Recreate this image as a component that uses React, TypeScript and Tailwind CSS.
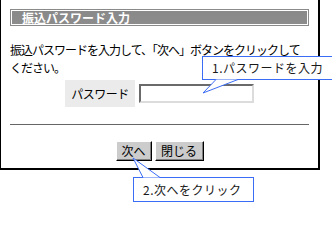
const jp = { fontFamily: '"Noto Sans CJK JP", "Noto Sans", sans-serif' };

function Callout({ className, text }: { className: string; text: string }) {
  return (
    <div
      className={`absolute bg-white border border-[#3b6cf5] text-[12px] text-[#1a1a1a] tracking-[0.5px] pl-[9px] flex items-center ${className}`}
      style={jp}
    >
      {text}
    </div>
  );
}

export default function App() {
  return (
    <div className="relative w-[332px] h-[202px] bg-white overflow-hidden" style={jp}>
      {/* dialog window */}
      <div className="w-[320px] h-[170px] border-l border-r-2 border-b-2 border-black flex flex-col px-[9px] pt-[9px]">
        <div className="h-[17px] border border-[#8a8a8a] p-px bg-white">
          <div className="h-full pl-[10px] flex items-center text-white font-bold text-[12px] leading-none [background:radial-gradient(circle,#8e8e8e_0.7px,transparent_0.8px)_0_0/2px_2px,linear-gradient(#505050,#747474)]">
            振込パスワード入力
          </div>
        </div>

        <p className="mt-[15px] text-[12px] leading-[18px] tracking-[-1px] text-black">
          振込パスワードを入力して、「次へ」ボタンをクリックしてください。
        </p>

        <div className="mt-[3px] flex justify-center items-center gap-[4px]">
          <div className="w-[70px] h-[27px] bg-[#ebebeb] flex items-center justify-center text-[12px] tracking-[-0.5px]">
            パスワード
          </div>
          <div className="w-[115px] h-[19px] bg-white border-2 border-t-[#6a6a6a] border-l-[#6a6a6a] border-b-[#dcdcdc] border-r-[#dcdcdc]" />
        </div>

        <div className="mt-[17px] border-t border-[#666666]" />

        <div className="mt-[16px] flex justify-center gap-[3px]">
          <button className="w-[36px] h-[20px] bg-[#cccccc] border border-t-white border-l-white border-b-black border-r-black shadow-[inset_-1px_-1px_0_#808080] text-[12px] leading-none">
            次へ
          </button>
          <button className="w-[49px] h-[20px] bg-[#cccccc] border border-t-white border-l-white border-b-black border-r-black shadow-[inset_-1px_-1px_0_#808080] text-[12px] leading-none">
            閉じる
          </button>
        </div>
      </div>

      <Callout className="left-[202px] top-[56px] w-[131px] h-[24px]" text="1.パスワードを入力" />
      <Callout className="left-[133px] top-[177px] w-[121px] h-[25px]" text="2.次へをクリック" />

      {/* callout tails */}
      <svg className="absolute inset-0 pointer-events-none" width="332" height="202" viewBox="0 0 332 202">
        <polygon points="216,79.5 203,93 238,79.5" fill="white" />
        <polyline points="216,79.5 203,93 238,79.5" fill="none" stroke="#3b6cf5" strokeWidth="1" />
        <polygon points="143,177.5 133,158 160,177.5" fill="white" />
        <polyline points="143,177.5 133,158 160,177.5" fill="none" stroke="#3b6cf5" strokeWidth="1" />
      </svg>
    </div>
  );
}
